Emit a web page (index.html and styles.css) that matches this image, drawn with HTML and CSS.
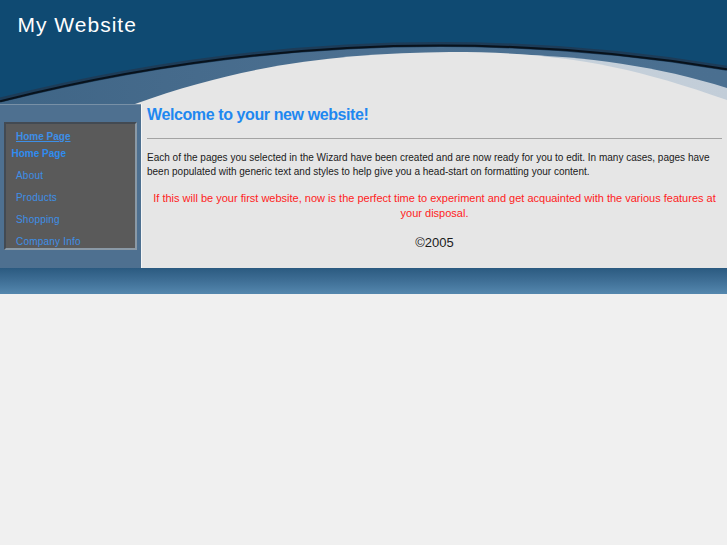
FILE: index.html
```html
<!DOCTYPE html>
<html lang="en">
<head>
<meta charset="utf-8">
<title>My Website</title>
<link rel="stylesheet" href="styles.css">
</head>
<body>
<div class="page">
  <header class="masthead">
    <svg class="swoosh" width="727" height="104" viewBox="0 0 727 104" aria-hidden="true">
      <defs>
        <linearGradient id="band" x1="0" y1="0" x2="1" y2="0">
          <stop offset="0" stop-color="#3f6586"/>
          <stop offset="0.5" stop-color="#4c7091"/>
          <stop offset="1" stop-color="#4a6f90"/>
        </linearGradient>
        <linearGradient id="pale" x1="0" y1="0" x2="1" y2="0">
          <stop offset="0" stop-color="#c6d1db" stop-opacity="0"/>
          <stop offset="0.35" stop-color="#c6d1db"/>
          <stop offset="1" stop-color="#c2cdd8"/>
        </linearGradient>
      </defs>
      <rect width="727" height="104" fill="#0f4a72"/>
      <path d="M0 101.7 Q363.5 9.6 727 69.7 L727 104 L0 104 Z" fill="url(#band)"/>
      <path d="M480 54 C570 54 650 64 727 88 L727 104 L480 104 Z" fill="url(#pale)"/>
      <path d="M135 104 C250 62 350 53 450 52 C550 52 620 62 727 100 L727 104 Z" fill="#e6e6e6"/>
      <path d="M0 100.2 Q363.5 8.1 727 68.2" fill="none" stroke="#1d3c58" stroke-width="5"/>
      <path d="M0 101.2 Q363.5 9.1 727 69.2" fill="none" stroke="#08121c" stroke-width="2"/>
    </svg>
    <h1 class="site-title">My Website</h1>
  </header>
  <div class="main">
    <nav class="sidebar">
      <div class="navbox">
        <a class="nav-home" href="#">Home Page</a>
        <div class="nav-current">Home Page</div>
        <ul class="nav-list">
          <li><a href="#">About</a></li>
          <li><a href="#">Products</a></li>
          <li><a href="#">Shopping</a></li>
          <li><a href="#">Company Info</a></li>
        </ul>
      </div>
    </nav>
    <section class="content">
      <h2 class="welcome">Welcome to your new website!</h2>
      <hr class="rule">
      <p class="intro">Each of the pages you selected in the Wizard have been created and are now ready for you to edit. In many cases, pages have been populated with generic text and styles to help give you a head-start on formatting your content.</p>
      <p class="notice">If this will be your first website, now is the perfect time to experiment and get acquainted with the various features at your disposal.</p>
      <p class="copyright">&copy;2005</p>
    </section>
  </div>
  <div class="footer-band"></div>
</div>
</body>
</html>
```

FILE: styles.css
```css
html, body {
  margin: 0;
  padding: 0;
  background: #f0f0f0;
  font-family: "Liberation Sans", Arial, Helvetica, sans-serif;
}

.page {
  width: 727px;
}

.masthead {
  position: relative;
  height: 104px;
  box-sizing: border-box;
  padding: 12.5px 0 0 17.5px;
}

.swoosh {
  position: absolute;
  left: 0;
  top: 0;
  display: block;
}

.site-title {
  position: relative;
  margin: 0;
  font-size: 21px;
  line-height: 24px;
  font-weight: normal;
  letter-spacing: 1px;
  color: #ffffff;
}

.main {
  display: flex;
  align-items: stretch;
}

.sidebar {
  width: 141px;
  box-sizing: border-box;
  padding: 17px 4px 18px 4px;
  background: #4e7090;
  border-top: 1px solid #7890a6;
}

.navbox {
  background: #5a5a5a;
  border-style: solid;
  border-width: 2px;
  border-color: #434a52 #8a99a6 #8a99a6 #434a52;
  padding: 3.5px 0 0 0;
  font-size: 10px;
}

.navbox a {
  color: #3d8fe8;
}

.nav-home {
  display: block;
  padding-left: 10px;
  line-height: 17px;
  font-weight: bold;
  text-decoration: underline;
}

.nav-current {
  padding-left: 5.5px;
  line-height: 17px;
  font-weight: bold;
  color: #2f8cf0;
}

.nav-list {
  list-style: none;
  margin: 7.3px 0 0 0;
  padding: 0;
  display: flex;
  flex-direction: column;
  gap: 9px;
}

.nav-list li {
  line-height: 13px;
  padding-left: 10px;
  letter-spacing: 0.2px;
}

.nav-list a {
  text-decoration: none;
}

.content {
  flex: 1;
  box-sizing: border-box;
  background: #e6e6e6;
  border-left: 1px solid #f6f6f6;
  padding: 1px 5px 17px 5px;
}

.welcome {
  margin: 0;
  font-size: 16px;
  line-height: 20px;
  font-weight: bold;
  letter-spacing: -0.4px;
  color: #1f88f0;
}

.rule {
  margin: 13px 0 0 0;
  height: 0;
  border: 0;
  border-top: 1px solid #a3a3a3;
}

.intro {
  margin: 11.5px 0 0 0;
  font-size: 10px;
  line-height: 14.3px;
  color: #1a1a1a;
}

.notice {
  margin: 11.5px 0 0 0;
  font-size: 11px;
  line-height: 15.6px;
  color: #ff2222;
  text-align: center;
}

.copyright {
  margin: 13.5px 0 0 0;
  font-size: 13px;
  line-height: 16px;
  color: #1a1a1a;
  text-align: center;
}

.footer-band {
  height: 26px;
  background: linear-gradient(to bottom, #2b5a80 0%, #3d6d94 45%, #5487ae 100%);
}
```
